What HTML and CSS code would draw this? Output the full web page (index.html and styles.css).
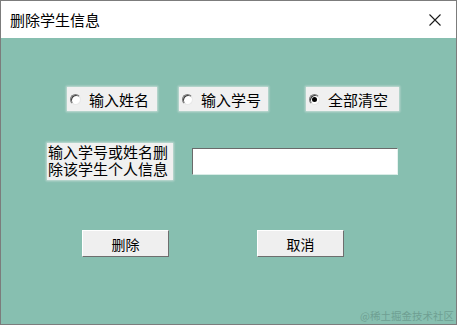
FILE: index.html
```html
<!DOCTYPE html>
<html lang="zh-CN">
<head>
<meta charset="utf-8">
<title>删除学生信息</title>
<link rel="stylesheet" href="styles.css">
</head>
<body>
<div class="window">
  <div class="titlebar">
    <span class="title">删除学生信息</span>
    <svg class="close" width="12" height="12" viewBox="0 0 12 12"><path d="M0.5 0.5 L11.5 11.5 M11.5 0.5 L0.5 11.5" stroke="#1a1a1a" stroke-width="1.1" fill="none"/></svg>
  </div>
  <div class="content">
    <div class="row radios">
      <label class="radio r1"><span class="dot"></span><span class="rtext">输入姓名</span></label>
      <label class="radio r2"><span class="dot"></span><span class="rtext">输入学号</span></label>
      <label class="radio r3"><span class="dot checked"></span><span class="rtext">全部清空</span></label>
    </div>
    <div class="row query">
      <div class="caption"><span class="cline">输入学号或姓名删</span><span class="cline">除该学生个人信息</span></div>
      <div class="input"></div>
    </div>
    <div class="row buttons">
      <div class="btn b1">删除</div>
      <div class="btn b2">取消</div>
    </div>
    <div class="watermark">@稀土掘金技术社区</div>
  </div>
</div>
</body>
</html>
```
FILE: styles.css
```css
* { box-sizing: border-box; }
html, body { margin: 0; padding: 0; }
body {
  width: 457px;
  height: 325px;
  font-family: "Noto Sans CJK SC", "Noto Sans", sans-serif;
  background: #87bfb0;
}
.window {
  width: 457px;
  height: 325px;
  border: 1px solid #7c7c7c;
  display: flex;
  flex-direction: column;
}
.titlebar {
  height: 37px;
  background: #ffffff;
  display: flex;
  align-items: center;
  padding-left: 9px;
  padding-right: 15px;
  flex-shrink: 0;
}
.title {
  font-size: 15px;
  color: #000;
  flex: 1;
  line-height: 1;
  margin-top: -1px;
}
.close { display: block; }
.content {
  flex: 1;
  background: #87bfb0;
  position: relative;
}
.row { display: flex; }
.radios {
  margin-top: 49px;
  height: 24px;
}
.radio {
  display: flex;
  align-items: center;
  background: #f0f0f0;
  height: 24px;
  font-size: 15px;
  color: #000;
  box-shadow: 0 0 2px 1px rgba(240,240,240,0.6);
}
.r1 { margin-left: 66px; width: 90px; padding-left: 3px; }
.r2 { margin-left: 22px; width: 89px; padding-left: 3px; }
.r3 { margin-left: 38px; width: 93px; padding-left: 3px; }
.dot {
  width: 11px;
  height: 11px;
  border-radius: 50%;
  background: #fff;
  border: 1px solid;
  border-color: #7a7a7a #e8e8e8 #e8e8e8 #7a7a7a;
  box-shadow: inset 1px 1px 0 #404040;
  margin-right: 8px;
  position: relative;
  flex-shrink: 0;
}
.dot.checked::after {
  content: "";
  position: absolute;
  left: 2px;
  top: 2px;
  width: 5px;
  height: 5px;
  border-radius: 50%;
  background: #000;
}
.rtext { line-height: 1; }
.query {
  margin-top: 32px;
  align-items: flex-start;
}
.caption {
  margin-left: 46px;
  width: 126px;
  height: 37px;
  background: #f0f0f0;
  font-size: 15px;
  padding: 1px 0 0 1px;
  color: #000;
  white-space: nowrap;
  display: flex;
  flex-direction: column;
  gap: 2px;
  box-shadow: 0 0 2px 1px rgba(240,240,240,0.6);
}
.cline {
  display: block;
  line-height: 15px;
  height: 15px;
}
.input {
  margin-left: 19px;
  margin-top: 5px;
  width: 206px;
  height: 27px;
  background: #ffffff;
  border: 1px solid;
  border-color: #6a6a6a #e6f2ee #d8ece6 #6a6a6a;
}
.buttons {
  margin-top: 50px;
}
.btn {
  width: 87px;
  height: 27px;
  background: #efefef;
  border: 1px solid;
  border-color: #ffffff #6e6e6e #6e6e6e #ffffff;
  display: flex;
  align-items: center;
  justify-content: center;
  font-size: 14px;
  color: #000;
  line-height: 1;
}
.b1 { margin-left: 81px; }
.b2 { margin-left: 88px; }
.watermark {
  position: absolute;
  right: 2px;
  bottom: 3px;
  font-size: 10.5px;
  color: #6f9f93;
  line-height: 1;
}
```
